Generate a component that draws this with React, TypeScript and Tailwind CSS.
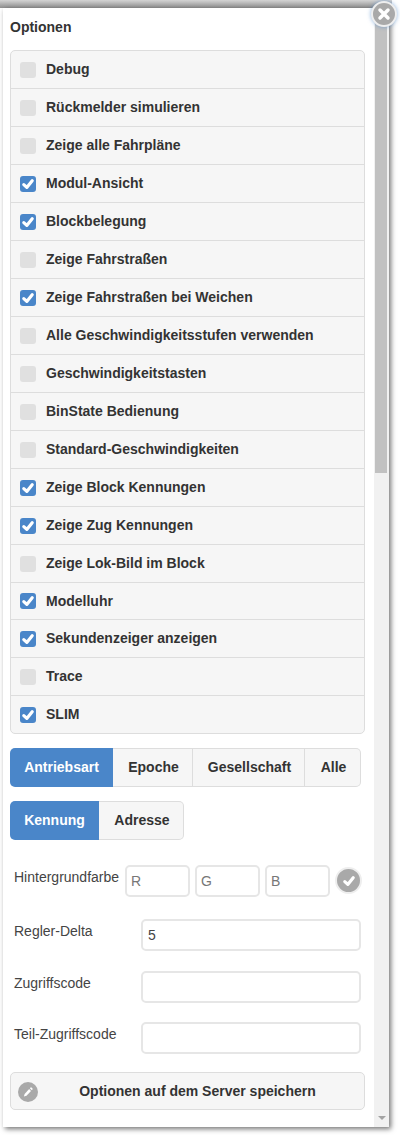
import React from 'react';

const OPTIONS: [string, boolean][] = [
  ['Debug', false],
  ['Rückmelder simulieren', false],
  ['Zeige alle Fahrpläne', false],
  ['Modul-Ansicht', true],
  ['Blockbelegung', true],
  ['Zeige Fahrstraßen', false],
  ['Zeige Fahrstraßen bei Weichen', true],
  ['Alle Geschwindigkeitsstufen verwenden', false],
  ['Geschwindigkeitstasten', false],
  ['BinState Bedienung', false],
  ['Standard-Geschwindigkeiten', false],
  ['Zeige Block Kennungen', true],
  ['Zeige Zug Kennungen', true],
  ['Zeige Lok-Bild im Block', false],
  ['Modelluhr', true],
  ['Sekundenzeiger anzeigen', true],
  ['Trace', false],
  ['SLIM', true],
];

function CheckMark({ className }: { className: string }) {
  return (
    <svg viewBox="0 0 16 16" className={className} fill="none" stroke="white" strokeWidth={3.2} strokeLinecap="round" strokeLinejoin="round">
      <path d="M3.8 8.6 L6.8 11.4 L12.2 4.8" />
    </svg>
  );
}

function Row({ label, checked, short, last }: { label: string; checked: boolean; short: boolean; last: boolean }) {
  return (
    <div className={`flex items-center pl-[9px] ${short ? 'h-[37px]' : 'h-[38px]'} ${last ? '' : 'border-b border-[#dddddd]'}`}>
      {checked ? (
        <span className="flex items-center justify-center w-4 h-4 rounded-[3px] bg-[#4a86c9]">
          <CheckMark className="w-4 h-4" />
        </span>
      ) : (
        <span className="w-4 h-4 rounded-[3px] bg-[#e0e0e0]" />
      )}
      <span className="ml-[10px] text-[14px] font-bold text-[#333333]">{label}</span>
    </div>
  );
}

function Segmented({ items, widths }: { items: string[]; widths: string[] }) {
  return (
    <div className="flex h-[39px]">
      {items.map((item, i) => (
        <div
          key={item}
          className={`flex items-center justify-center text-[14px] font-bold ${widths[i]} ${
            i === 0
              ? 'bg-[#4a86c9] text-white rounded-l-[5px]'
              : `pl-[2px] bg-[#f6f6f6] text-[#333333] border-y border-r border-[#dddddd] ${i === items.length - 1 ? 'rounded-r-[5px]' : ''}`
          }`}
        >
          {item}
        </div>
      ))}
    </div>
  );
}

function Field({ label, value }: { label: string; value?: string }) {
  return (
    <div className="flex items-start">
      <label className="w-[131px] pl-1 pt-[2px] text-[14px] text-[#444444]">{label}</label>
      <div className="w-[220px] h-[32px] flex items-center pl-[5px] border-2 border-[#e6e6e6] rounded-[5px] text-[14px] text-[#444444] bg-white">
        {value}
      </div>
    </div>
  );
}

function RgbInput({ label }: { label: string }) {
  return (
    <div className="w-[65px] h-[32px] flex items-center pl-[4px] border-2 border-[#e6e6e6] rounded-[5px] text-[14px] text-[#777777]">
      {label}
    </div>
  );
}

export default function App() {
  return (
    <div className="relative w-[400px] h-[1135px] overflow-hidden bg-white font-['Liberation_Sans',Arial,sans-serif]">
      <div className="h-[8px] bg-gradient-to-b from-[#d4d4d4] to-[#8f8f8f] mr-[8px]" />
      <div className="flex w-[386px] h-[1119px] ml-[3px] shadow-[2px_2px_5px_rgba(0,0,0,0.55)]">
        <div className="flex-1 bg-white pl-[7px] pr-[9px]">
          <h2 className="pt-[9px] h-[42px] text-[14px] font-bold text-[#333333]">Optionen</h2>
          <div className="border border-[#dddddd] rounded-[5px] bg-[#f6f6f6]">
            {OPTIONS.map(([label, checked], i) => (
              <Row key={label} label={label} checked={checked} short={i === 14 || i === 17} last={i === OPTIONS.length - 1} />
            ))}
          </div>
          <div className="mt-[14px]">
            <Segmented items={['Antriebsart', 'Epoche', 'Gesellschaft', 'Alle']} widths={['w-[103px]', 'w-[80px]', 'w-[112px]', 'w-[56px]']} />
          </div>
          <div className="mt-[14px]">
            <Segmented items={['Kennung', 'Adresse']} widths={['w-[89px]', 'w-[85px]']} />
          </div>
          <div className="flex items-start mt-[25px]">
            <label className="w-[115px] pl-1 pt-[2px] text-[14px] text-[#444444]">Hintergrundfarbe</label>
            <div className="flex gap-[5px]">
              <RgbInput label="R" />
              <RgbInput label="G" />
              <RgbInput label="B" />
            </div>
            <span className="ml-[5px] mt-[2px] flex items-center justify-center w-[27px] h-[27px] rounded-full bg-[#a9a9a9] border-2 border-[#eeeeee]">
              <CheckMark className="w-4 h-4" />
            </span>
          </div>
          <div className="flex flex-col gap-[19.5px] mt-[22px]">
            <Field label="Regler-Delta" value="5" />
            <Field label="Zugriffscode" />
            <Field label="Teil-Zugriffscode" />
          </div>
          <div className="relative flex items-center justify-center h-[38px] mt-[18px] pl-[20px] bg-[#f6f6f6] border border-[#dddddd] rounded-[5px] text-[14px] font-bold text-[#333333]">
            <span className="absolute left-[7px] top-[9px] flex items-center justify-center w-5 h-5 rounded-full bg-[#a9a9a9]">
              <svg viewBox="0 0 16 16" className="w-3 h-3" fill="white">
                <path d="M9.5 4 L12 6.5 L6 13 L2.5 14 L3.5 10.5 Z" />
                <path d="M10.5 3 L11.5 2 Q12 1.6 12.6 2 L14 3.4 Q14.4 4 14 4.5 L13 5.5 Z" />
              </svg>
            </span>
            Optionen auf dem Server speichern
          </div>
        </div>
        <div className="relative w-[15px] bg-[#f1f1f1]">
          <div className="ml-[1px] w-[12px] h-[465px] bg-[#c1c1c1]" />
          <span className="absolute bottom-[7px] left-[4px] w-0 h-0 border-x-[4px] border-x-transparent border-t-[4px] border-t-[#a3a3a3]" />
        </div>
      </div>
      <span className="absolute left-[371px] top-px flex items-center justify-center w-[26px] h-[26px] rounded-full bg-[#a9a9a9] border-2 border-[#eeeeee] shadow-[0_0_4px_rgba(74,134,201,0.6)]">
        <svg viewBox="0 0 16 16" className="w-4 h-4" stroke="white" strokeWidth={3.5} strokeLinecap="round">
          <path d="M4 4 L12 12 M12 4 L4 12" />
        </svg>
      </span>
    </div>
  );
}
